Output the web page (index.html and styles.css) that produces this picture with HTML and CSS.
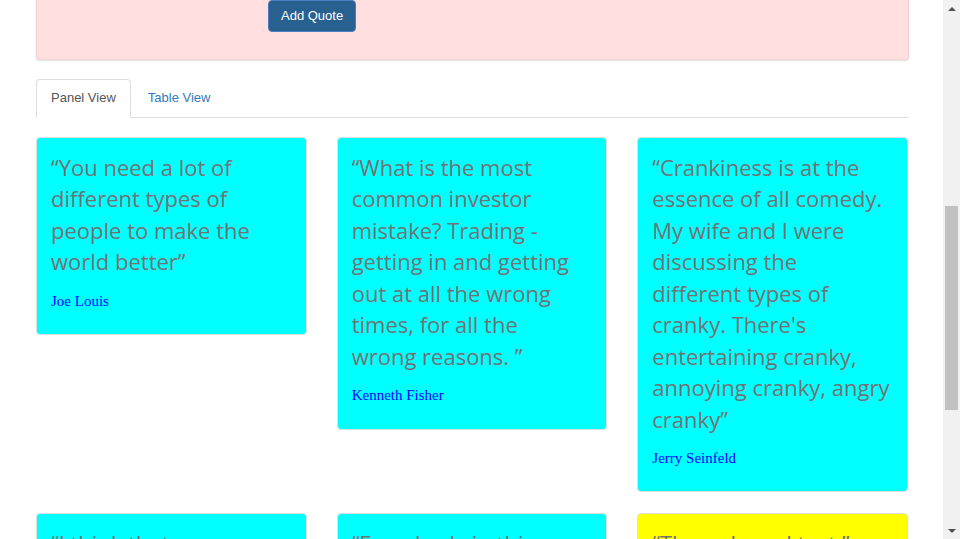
FILE: index.html
```html
<!DOCTYPE html>
<html lang="en">
<head>
<meta charset="utf-8">
<title>Quotes</title>
<link rel="stylesheet" href="styles.css">
</head>
<body>
<div class="page">
  <main class="main">
    <section class="add-panel">
      <button class="btn-primary" type="button">Add Quote</button>
    </section>

    <ul class="nav-tabs">
      <li class="tab active">Panel View</li>
      <li class="tab">Table View</li>
    </ul>

    <div class="grid">
      <article class="card">
        <p class="quote">“You need a lot of<br>different types of<br>people to make the<br>world better”</p>
        <p class="author">Joe Louis</p>
      </article>
      <article class="card">
        <p class="quote">“What is the most<br>common investor<br>mistake? Trading -<br>getting in and getting<br>out at all the wrong<br>times, for all the<br>wrong reasons. ”</p>
        <p class="author">Kenneth Fisher</p>
      </article>
      <article class="card">
        <p class="quote">“Crankiness is at the<br>essence of all comedy.<br>My wife and I were<br>discussing the<br>different types of<br>cranky. There's<br>entertaining cranky,<br>annoying cranky, angry<br>cranky”</p>
        <p class="author">Jerry Seinfeld</p>
      </article>
      <article class="card">
        <p class="quote">“I think that<br>everyone should</p>
        <p class="author">Unknown</p>
      </article>
      <article class="card">
        <p class="quote">“Everybody in this<br>world</p>
        <p class="author">Unknown</p>
      </article>
      <article class="card card-yellow">
        <p class="quote">“The only real test ”</p>
        <p class="author">Unknown</p>
      </article>
    </div>
  </main>

  <aside class="scrollbar">
    <div class="arrow"><span class="tri-up"></span></div>
    <div class="track"><div class="thumb"></div></div>
    <div class="arrow"><span class="tri-down"></span></div>
  </aside>
</div>
</body>
</html>
```
FILE: styles.css
```css
* { box-sizing: border-box; }

html, body {
  margin: 0;
  padding: 0;
  height: 539px;
  overflow: hidden;
  background: #fff;
  font-family: "Liberation Sans", Arial, sans-serif;
  font-size: 13px;
  color: #333;
}

.page {
  display: flex;
  height: 539px;
}

.main {
  flex: 1;
  min-width: 0;
  padding: 0 34px 0 36px;
  overflow: hidden;
}

/* pink add-quote panel (scrolled, top is cut off) */
.add-panel {
  height: 60px;
  background: #ffdfe0;
  border: 1px solid #f3d0d2;
  border-top: none;
  border-radius: 0 0 4px 4px;
  box-shadow: 0 1px 2px rgba(0, 0, 0, 0.12);
  padding-left: 231px;
}

.btn-primary {
  display: block;
  margin-top: 0;
  padding: 6px 12px;
  font-family: "Liberation Sans", Arial, sans-serif;
  font-size: 13px;
  line-height: 18px;
  color: #fff;
  background: #286090;
  border: 1px solid #4a7cc0;
  border-radius: 4px;
}

/* tabs */
.nav-tabs {
  display: flex;
  list-style: none;
  margin: 19px 0 0;
  padding: 0;
  border-bottom: 1px solid #ddd;
}

.tab {
  margin-right: 2px;
  margin-bottom: -1px;
  padding: 9px 14px 10px;
  line-height: 18px;
  font-size: 13px;
  color: #337ab7;
  border: 1px solid transparent;
  border-radius: 4px 4px 0 0;
}

.tab.active {
  color: #555;
  background: #fff;
  border-color: #ddd;
  border-bottom-color: transparent;
}

/* quote cards */
.grid {
  display: grid;
  grid-template-columns: repeat(3, 1fr);
  column-gap: 30px;
  row-gap: 21px;
  align-items: start;
  margin-top: 19px;
  padding-right: 1px;
}

.card {
  background: #00ffff;
  border: 1px solid #ddd;
  border-radius: 4px;
  padding: 14px 15px 22px 14px;
}

.card-yellow { background: #ffff00; }

.quote {
  margin: 0 0 13px;
  font-family: "Open Sans", "DejaVu Sans", sans-serif;
  font-size: 22px;
  line-height: 31.43px;
  color: #727272;
  white-space: nowrap;
}

.author {
  margin: 0;
  font-family: "Liberation Serif", "Times New Roman", serif;
  font-size: 15px;
  line-height: 21.43px;
  color: #0000ff;
}

/* scrollbar */
.scrollbar {
  width: 17px;
  flex: none;
  display: flex;
  flex-direction: column;
  background: #f1f1f1;
}

.arrow {
  height: 17px;
  display: flex;
  align-items: center;
  justify-content: center;
}

.tri-up, .tri-down {
  width: 0;
  height: 0;
  border-left: 4px solid transparent;
  border-right: 4px solid transparent;
}

.tri-up { border-bottom: 4px solid #505050; }
.tri-down { border-top: 4px solid #505050; }

.track { flex: 1; }

.thumb {
  margin: 189px 2px 0;
  height: 204px;
  background: #c1c1c1;
}
```
